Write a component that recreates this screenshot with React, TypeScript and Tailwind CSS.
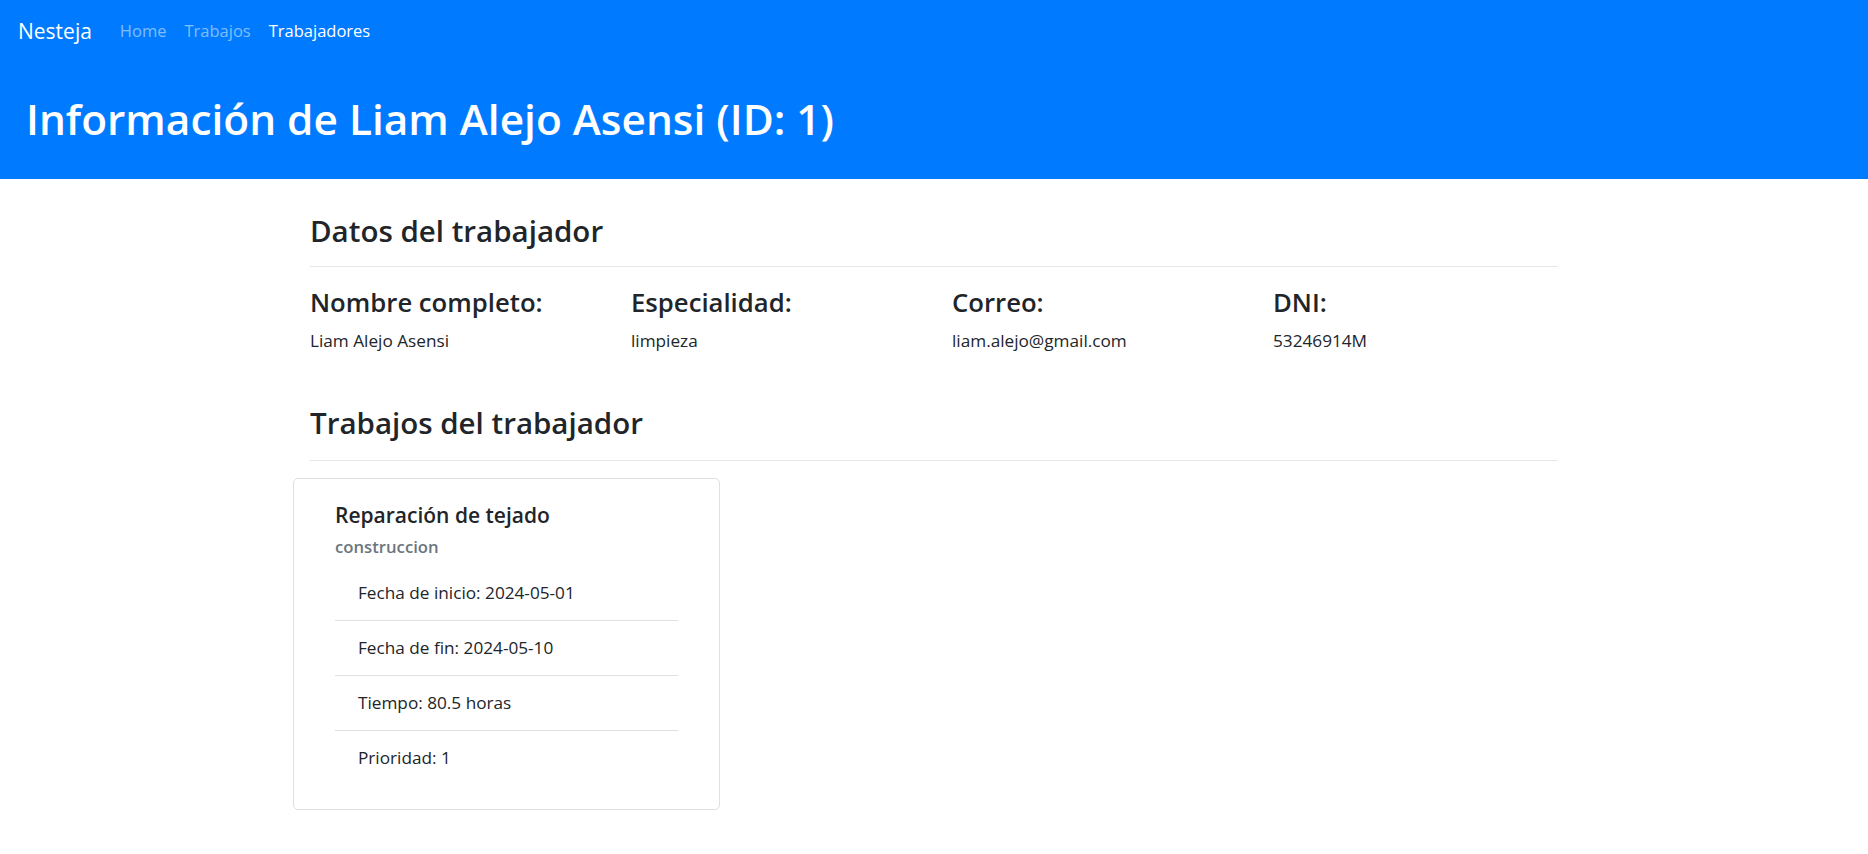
const ff = { fontFamily: '"Open Sans", "Noto Sans", "Liberation Sans", sans-serif' };

const datos = [
  { label: "Nombre completo:", value: "Liam Alejo Asensi" },
  { label: "Especialidad:", value: "limpieza" },
  { label: "Correo:", value: "liam.alejo@gmail.com" },
  { label: "DNI:", value: "53246914M" },
];

const trabajo = {
  nombre: "Reparación de tejado",
  categoria: "construccion",
  items: [
    "Fecha de inicio: 2024-05-01",
    "Fecha de fin: 2024-05-10",
    "Tiempo: 80.5 horas",
    "Prioridad: 1",
  ],
};

function Navbar() {
  return (
    <nav className="flex h-[62px] items-center px-[18px]">
      <span className="mr-[28px] text-[21px] leading-none text-white">Nesteja</span>
      <div className="flex items-center gap-[18px] text-[16.5px] leading-none">
        <a className="text-white/50">Home</a>
        <a className="text-white/50">Trabajos</a>
        <a className="text-white">Trabajadores</a>
      </div>
    </nav>
  );
}

function SectionTitle({ children, gap }: { children: string; gap: string }) {
  return (
    <div>
      <h3 className="text-[29.5px] font-semibold leading-[35px] text-[#212529]">{children}</h3>
      <hr className={gap + " border-t border-[#e6e6e6]"} />
    </div>
  );
}

export default function App() {
  return (
    <div className="min-h-screen bg-white text-[#212529]" style={ff}>
      <header className="bg-[#007bff]">
        <Navbar />
        <h1 className="px-[26px] pb-[31px] pt-[28px] text-[42.4px] font-semibold leading-[58px] text-white">
          Información de Liam Alejo Asensi (ID: 1)
        </h1>
      </header>

      <main className="mx-auto w-[1248px] pt-[34px]">
        <SectionTitle gap="mt-[18px]">Datos del trabajador</SectionTitle>

        <div className="-mx-[18px] mt-[21px] grid grid-cols-4">
          {datos.map((d) => (
            <div key={d.label} className="px-[18px]">
              <h5 className="text-[25.7px] font-semibold leading-[29px]">{d.label}</h5>
              <p className="mt-[9px] text-[17.2px] leading-[29px]">{d.value}</p>
            </div>
          ))}
        </div>

        <div className="mt-[50px]">
          <SectionTitle gap="mt-[20px]">Trabajos del trabajador</SectionTitle>
        </div>

        <div className="-mx-[17px] mt-[17px] grid grid-cols-3">
          <div className="rounded-[5px] border border-[#dfdfdf] px-[41px] pb-[24px] pt-[22px]">
            <h5 className="text-[21px] font-semibold leading-[29px]">{trabajo.nombre}</h5>
            <h6 className="mt-[5px] text-[16.7px] font-semibold leading-[23px] text-[#6c757d]">
              {trabajo.categoria}
            </h6>
            <ul className="mt-[8px]">
              {trabajo.items.map((it, i) => (
                <li
                  key={it}
                  className={
                    "px-[23px] py-[13px] text-[17.2px] leading-[28px] " +
                    (i < trabajo.items.length - 1 ? "border-b border-[#dfdfdf]" : "")
                  }
                >
                  {it}
                </li>
              ))}
            </ul>
          </div>
        </div>
      </main>
    </div>
  );
}
